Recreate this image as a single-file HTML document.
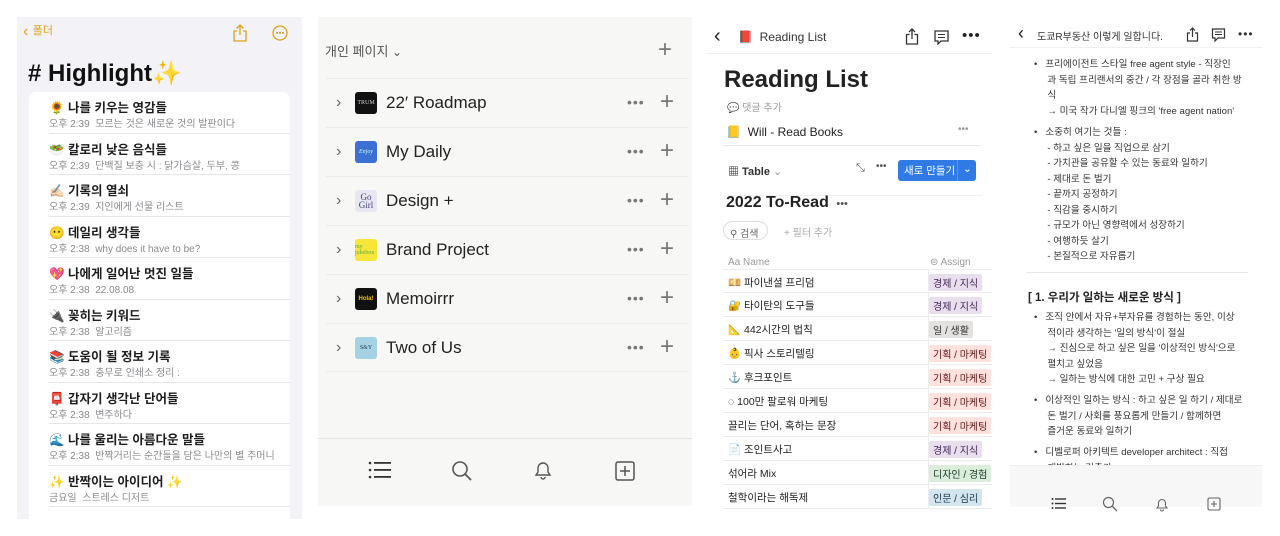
<!DOCTYPE html>
<html><head><meta charset="utf-8"><style>
*{margin:0;padding:0;box-sizing:border-box}
body{width:1280px;height:536px;background:#fff;position:relative;overflow:hidden;font-family:"Liberation Sans","Noto Sans CJK KR",sans-serif;color:#1d1d1f}
.a{position:absolute;white-space:nowrap}
#p1{position:absolute;left:17px;top:17px;width:285px;height:502px;background:#f2f2f7;overflow:hidden}
#card{position:absolute;left:12px;top:75px;width:261px;height:440px;background:#fff;border-radius:8px}
.n{position:absolute;left:20px;width:241px;height:41.5px;border-bottom:1px solid #e5e5ea}
.n b{position:absolute;left:0;top:5px;font-size:12.5px;font-weight:bold}
.n i{position:absolute;left:0;top:23px;font-size:10px;font-style:normal;color:#8a8a8e}
#p2{position:absolute;left:318px;top:17px;width:374px;height:489px;background:#f7f7f5}
.r{position:absolute;left:8px;width:363px;height:49px;border-top:1px solid #ececea}
.r .ch{position:absolute;left:10px;top:15px;font-size:16px;color:#666}
.r .ic{position:absolute;left:29px;top:13px;width:22px;height:22px;border-radius:3px;font-size:6px;display:flex;align-items:center;justify-content:center;font-family:"Liberation Serif",serif}
.r .t{position:absolute;left:60px;top:14px;font-size:17px;color:#222}
.r .d{position:absolute;left:301px;top:15px;font-size:14px;color:#777;letter-spacing:1px}
.r .pl{position:absolute;left:334px;top:9px;font-size:24px;color:#777;font-weight:300}
#p3{position:absolute;left:706px;top:17px;width:286px;height:502px;background:#fff;overflow:hidden}
.tr{position:absolute;left:17px;width:269px;height:24px;border-bottom:1px solid #ececec;font-size:10.5px}
.tr span.nm{position:absolute;left:5px;top:5px}
.tr span.tg{position:absolute;left:206px;top:4px;padding:1px 4px;font-size:10px;border-radius:2px}
.tr:after{content:"";position:absolute;left:205px;top:0;height:24px;border-left:1px solid #ececec}
.pu{background:#e8deee;color:#412454}.gr{background:#e3e2e0;color:#32302c}.rd{background:#ffe2dd;color:#5d1715}.gn{background:#dbeddb;color:#1c3829}.bl{background:#d3e5ef;color:#183347}
#p4{position:absolute;left:1010px;top:17px;width:252px;height:502px;background:#fff;overflow:hidden}
.tx{position:absolute;font-size:9.6px;color:#333;line-height:15.5px;white-space:nowrap}
</style></head><body>

<div id="p1">
 <div class="a" style="left:6px;top:6px;color:#d9a21b;font-size:16px">&#8249;&nbsp;<span style="font-size:11px;position:relative;top:-2px">폴더</span></div>
 <svg class="a" style="left:215px;top:7px" width="16" height="18" viewBox="0 0 16 18"><path d="M8 1v10M4.5 4.5L8 1l3.5 3.5M5 7H2v10h12V7h-3" fill="none" stroke="#d9a21b" stroke-width="1.3"/></svg>
 <svg class="a" style="left:255px;top:8px" width="16" height="16"><circle cx="8" cy="8" r="7" fill="none" stroke="#d9a21b" stroke-width="1.3"/><circle cx="5" cy="8" r="1" fill="#d9a21b"/><circle cx="8" cy="8" r="1" fill="#d9a21b"/><circle cx="11" cy="8" r="1" fill="#d9a21b"/></svg>
 <div class="a" style="left:11px;top:42px;font-size:24px;font-weight:bold;color:#111"># Highlight<span style="color:#f5c542">✨</span></div>
 <div id="card">
  <div class="n" style="top:0"><b>🌻 나를 키우는 영감들</b><i>오후 2:39&nbsp; 모르는 것은 새로운 것의 발판이다</i></div>
  <div class="n" style="top:41.5px"><b>🥗 칼로리 낮은 음식들</b><i>오후 2:39&nbsp; 단백질 보충 시 : 닭가슴살, 두부, 콩</i></div>
  <div class="n" style="top:83px"><b>✍🏻 기록의 열쇠</b><i>오후 2:39&nbsp; 지인에게 선물 리스트</i></div>
  <div class="n" style="top:124.5px"><b>😶 데일리 생각들</b><i>오후 2:38&nbsp; why does it have to be?</i></div>
  <div class="n" style="top:166px"><b>💖 나에게 일어난 멋진 일들</b><i>오후 2:38&nbsp; 22.08.08</i></div>
  <div class="n" style="top:207.5px"><b>🔌 꽂히는 키워드</b><i>오후 2:38&nbsp; 알고리즘</i></div>
  <div class="n" style="top:249px"><b>📚 도움이 될 정보 기록</b><i>오후 2:38&nbsp; 충무로 인쇄소 정리 :</i></div>
  <div class="n" style="top:290.5px"><b>📮 갑자기 생각난 단어들</b><i>오후 2:38&nbsp; 변주하다</i></div>
  <div class="n" style="top:332px"><b>🌊 나를 울리는 아름다운 말들</b><i>오후 2:38&nbsp; 반짝거리는 순간들을 담은 나만의 별 주머니</i></div>
  <div class="n" style="top:373.5px"><b>✨ 반짝이는 아이디어 ✨</b><i>금요일&nbsp; 스트레스 디저트</i></div>
 </div>
</div>

<div id="p2">
 <div class="a" style="left:7px;top:24px;font-size:13px;color:#555">개인 페이지 <span style="font-size:12px">&#8964;</span></div>
 <div class="a" style="left:340px;top:19px;font-size:24px;color:#777;font-weight:300">+</div>
 <div class="r" style="top:61px"><span class="ch">›</span><span class="ic" style="background:#111;color:#ccc">TRUM</span><span class="t">22′ Roadmap</span><span class="d">•••</span><span class="pl">+</span></div>
 <div class="r" style="top:110px"><span class="ic" style="background:#3b6fd4;color:#cfe"><i>Enjoy</i></span><span class="ch">›</span><span class="t">My Daily</span><span class="d">•••</span><span class="pl">+</span></div>
 <div class="r" style="top:159px"><span class="ch">›</span><span class="ic" style="background:#e8e6f0;color:#447;font-size:9px;line-height:8px;text-align:center">Go<br>Girl</span><span class="t">Design +</span><span class="d">•••</span><span class="pl">+</span></div>
 <div class="r" style="top:208px"><span class="ch">›</span><span class="ic" style="background:#f7e637;color:#5a5">my jukebox</span><span class="t">Brand Project</span><span class="d">•••</span><span class="pl">+</span></div>
 <div class="r" style="top:257px"><span class="ch">›</span><span class="ic" style="background:#111;color:#f5c000;font-family:'Liberation Sans';font-weight:bold">Hola!</span><span class="t">Memoirrr</span><span class="d">•••</span><span class="pl">+</span></div>
 <div class="r" style="top:306px;border-bottom:1px solid #ececea"><span class="ch">›</span><span class="ic" style="background:#a5d2e3;color:#345">S&amp;Y</span><span class="t">Two of Us</span><span class="d">•••</span><span class="pl">+</span></div>
 <div class="a" style="left:0;top:421px;width:374px;height:68px;border-top:1px solid #e5e5e3;background:#f7f7f5"></div>
 <svg class="a" style="left:50px;top:443px" width="24" height="20"><g fill="#333"><circle cx="2" cy="3" r="1.3"/><circle cx="2" cy="10" r="1.3"/><circle cx="2" cy="17" r="1.3"/><rect x="6" y="2" width="17" height="1.8"/><rect x="6" y="9" width="17" height="1.8"/><rect x="6" y="16" width="17" height="1.8"/></g></svg>
 <svg class="a" style="left:133px;top:443px" width="22" height="22"><circle cx="9" cy="9" r="7" fill="none" stroke="#555" stroke-width="1.6"/><path d="M14 14l6 6" stroke="#555" stroke-width="1.8"/></svg>
 <svg class="a" style="left:214px;top:442px" width="22" height="22"><path d="M4 16h14l-2-3V9a5 5 0 0 0-10 0v4zM9 18a2 2 0 0 0 4 0" fill="none" stroke="#555" stroke-width="1.4"/></svg>
 <svg class="a" style="left:296px;top:443px" width="22" height="22"><rect x="2" y="2" width="18" height="18" rx="2" fill="none" stroke="#555" stroke-width="1.5"/><path d="M11 6v10M6 11h10" stroke="#555" stroke-width="1.5"/></svg>
</div>

<div id="p3">
 <div class="a" style="left:8px;top:8px;font-size:20px;color:#222">&#8249;</div>
 <div class="a" style="left:32px;top:13px;font-size:12px">📕&nbsp; <span style="color:#333">Reading List</span></div>
 <svg class="a" style="left:199px;top:11px" width="14" height="17"><path d="M7 1v10M4 4l3-3 3 3M4.5 6.5H1.5V16h11V6.5h-3" fill="none" stroke="#333" stroke-width="1.3"/></svg>
 <svg class="a" style="left:227px;top:13px" width="17" height="15"><path d="M2 1h13v10H8l-3 3v-3H2z" fill="none" stroke="#333" stroke-width="1.3"/><path d="M5 4.5h7M5 7.5h7" stroke="#333"/></svg>
 <div class="a" style="left:256px;top:10px;font-size:15px;color:#222;letter-spacing:1px">•••</div>
 <div class="a" style="left:0;top:36px;width:286px;border-top:1px solid #f0f0f0"></div>
 <div class="a" style="left:18px;top:49px;font-size:24px;font-weight:bold;color:#222">Reading List</div>
 <div class="a" style="left:21px;top:82px;font-size:10px;color:#999">💬 댓글 추가</div>
 <div class="a" style="left:20px;top:108px;font-size:12px;color:#222">📒&nbsp; Will - Read Books</div>
 <div class="a" style="left:252px;top:107px;font-size:10px;color:#999">•••</div>
 <div class="a" style="left:17px;top:128px;width:259px;border-top:1px solid #eaeaea"></div>
 <div class="a" style="left:22px;top:146px;font-size:11px;font-weight:bold;color:#333">▦ Table <span style="font-weight:normal;color:#999">&#8964;</span></div>
 <div class="a" style="left:150px;top:145px;font-size:11px;color:#555">⤡</div>
 <div class="a" style="left:170px;top:144px;font-size:10px;color:#555">•••</div>
 <div class="a" style="left:192px;top:143px;width:78px;height:21px;background:#2f7ae5;border-radius:3px;color:#fff;font-size:10.5px;padding:3px 0 0 6px">새로 만들기 <span style="position:absolute;left:59px;top:0;height:21px;border-left:1px solid #5a95ee;padding:3px 0 0 5px">&#8964;</span></div>
 <div class="a" style="left:17px;top:178px;width:259px;border-top:1px solid #f0f0f0"></div>
 <div class="a" style="left:20px;top:177px;font-size:16px;font-weight:bold;color:#222">2022 To-Read <span style="font-size:11px;color:#555;font-weight:normal">&nbsp;•••</span></div>
 <div class="a" style="left:17px;top:204px;width:45px;height:19px;border:1px solid #ddd;border-radius:10px;font-size:10px;color:#666;padding:3px 0 0 6px">⚲ 검색</div>
 <div class="a" style="left:78px;top:207px;font-size:10px;color:#aaa">+ 필터 추가</div>
 <div class="a" style="left:22px;top:240px;font-size:10px;color:#999">Aa Name</div>
 <div class="a" style="left:224px;top:240px;font-size:10px;color:#999">⊜ Assign</div>
 <div class="tr" style="top:252px;border-top:1px solid #ececec"><span class="nm">💴 파이낸셜 프리덤</span><span class="tg pu">경제 / 지식</span></div>
 <div class="tr" style="top:276px"><span class="nm">🔐 타이탄의 도구들</span><span class="tg pu">경제 / 지식</span></div>
 <div class="tr" style="top:300px"><span class="nm">📐 442시간의 법칙</span><span class="tg gr">일 / 생활</span></div>
 <div class="tr" style="top:324px"><span class="nm">👶 픽사 스토리텔링</span><span class="tg rd">기획 / 마케팅</span></div>
 <div class="tr" style="top:348px"><span class="nm">⚓ 후크포인트</span><span class="tg rd">기획 / 마케팅</span></div>
 <div class="tr" style="top:372px"><span class="nm">◌ 100만 팔로워 마케팅</span><span class="tg rd">기획 / 마케팅</span></div>
 <div class="tr" style="top:396px"><span class="nm">끌리는 단어, 혹하는 문장</span><span class="tg rd">기획 / 마케팅</span></div>
 <div class="tr" style="top:420px"><span class="nm">📄 조인트사고</span><span class="tg pu">경제 / 지식</span></div>
 <div class="tr" style="top:444px"><span class="nm">섞어라 Mix</span><span class="tg gn">디자인 / 경험</span></div>
 <div class="tr" style="top:468px"><span class="nm">철학이라는 해독제</span><span class="tg bl">인문 / 심리</span></div>
</div>

<div id="p4">
 <div class="a" style="left:8px;top:6px;font-size:18px;color:#222">&#8249;</div>
 <div class="a" style="left:27px;top:11px;font-size:10px;color:#333">도쿄R부동산 이렇게 일합니다.</div>
 <svg class="a" style="left:176px;top:10px" width="13" height="15"><path d="M6.5 1v9M4 3.5l2.5-2.5 2.5 2.5M4 6H1.5v8h10V6H9" fill="none" stroke="#333" stroke-width="1.2"/></svg>
 <svg class="a" style="left:201px;top:11px" width="15" height="14"><path d="M1.5 1h12v9H7l-3 3v-3H1.5z" fill="none" stroke="#333" stroke-width="1.2"/><path d="M4 4h7M4 6.5h7" stroke="#333"/></svg>
 <div class="a" style="left:228px;top:10px;font-size:12px;color:#333;letter-spacing:1px">•••</div>
 <div class="a" style="left:0;top:30px;width:252px;border-top:1px solid #f0f0f0"></div>
 <div class="tx" style="left:24px;top:40px">•&nbsp;&nbsp; 프리에이전트 스타일 free agent style - 직장인<br>&nbsp;&nbsp;&nbsp;&nbsp; 과 독립 프리랜서의 중간 / 각 장점을 골라 취한 방<br>&nbsp;&nbsp;&nbsp;&nbsp; 식<br>&nbsp;&nbsp;&nbsp;&nbsp; → 미국 작가 다니엘 핑크의 'free agent nation'</div>
 <div class="tx" style="left:24px;top:108px">•&nbsp;&nbsp; 소중히 여기는 것들 :<br>&nbsp;&nbsp;&nbsp;&nbsp; - 하고 싶은 일을 직업으로 삼기<br>&nbsp;&nbsp;&nbsp;&nbsp; - 가치관을 공유할 수 있는 동료와 일하기<br>&nbsp;&nbsp;&nbsp;&nbsp; - 제대로 돈 벌기<br>&nbsp;&nbsp;&nbsp;&nbsp; - 끝까지 공정하기<br>&nbsp;&nbsp;&nbsp;&nbsp; - 직감을 중시하기<br>&nbsp;&nbsp;&nbsp;&nbsp; - 규모가 아닌 영향력에서 성장하기<br>&nbsp;&nbsp;&nbsp;&nbsp; - 여행하듯 살기<br>&nbsp;&nbsp;&nbsp;&nbsp; - 본질적으로 자유롭기</div>
 <div class="a" style="left:16px;top:255px;width:222px;border-top:1px solid #e8e8e8"></div>
 <div class="a" style="left:18px;top:272px;font-size:11.5px;font-weight:bold;color:#222">[ 1. 우리가 일하는 새로운 방식 ]</div>
 <div class="tx" style="left:24px;top:293px">•&nbsp;&nbsp; 조직 안에서 자유+부자유를 경험하는 동안, 이상<br>&nbsp;&nbsp;&nbsp;&nbsp; 적이라 생각하는 '일의 방식'이 절실<br>&nbsp;&nbsp;&nbsp;&nbsp; → 진심으로 하고 싶은 일을 '이상적인 방식'으로<br>&nbsp;&nbsp;&nbsp;&nbsp; 펼치고 싶었음<br>&nbsp;&nbsp;&nbsp;&nbsp; → 일하는 방식에 대한 고민 + 구상 필요</div>
 <div class="tx" style="left:24px;top:376px">•&nbsp;&nbsp; 이상적인 일하는 방식 : 하고 싶은 일 하기 / 제대로<br>&nbsp;&nbsp;&nbsp;&nbsp; 돈 벌기 / 사회를 풍요롭게 만들기 / 함께하면<br>&nbsp;&nbsp;&nbsp;&nbsp; 즐거운 동료와 일하기</div>
 <div class="tx" style="left:24px;top:428px">•&nbsp;&nbsp; 디벨로퍼 아키텍트 developer architect : 직접<br>&nbsp;&nbsp;&nbsp;&nbsp; 개발하는 건축가</div>
 <div class="a" style="left:0;top:448px;width:252px;height:42px;background:#f7f7f7;border-top:1px solid #eee"></div>
 <svg class="a" style="left:41px;top:480px" width="16" height="13"><g fill="#333"><circle cx="1.5" cy="2" r="1"/><circle cx="1.5" cy="6.5" r="1"/><circle cx="1.5" cy="11" r="1"/><rect x="4" y="1.3" width="11" height="1.4"/><rect x="4" y="5.8" width="11" height="1.4"/><rect x="4" y="10.3" width="11" height="1.4"/></g></svg>
 <svg class="a" style="left:92px;top:479px" width="16" height="16"><circle cx="6.5" cy="6.5" r="5" fill="none" stroke="#666" stroke-width="1.2"/><path d="M10 10l5 5" stroke="#666" stroke-width="1.3"/></svg>
 <svg class="a" style="left:145px;top:479px" width="14" height="16"><path d="M2 12h10l-1.5-2V7a3.5 3.5 0 0 0-7 0v3zM5.5 13.5a1.5 1.5 0 0 0 3 0" fill="none" stroke="#666" stroke-width="1.1"/></svg>
 <svg class="a" style="left:197px;top:480px" width="14" height="14"><rect x="1" y="1" width="12" height="12" rx="1.5" fill="none" stroke="#666" stroke-width="1.1"/><path d="M7 4v6M4 7h6" stroke="#666" stroke-width="1.1"/></svg>
</div>
</body></html>
